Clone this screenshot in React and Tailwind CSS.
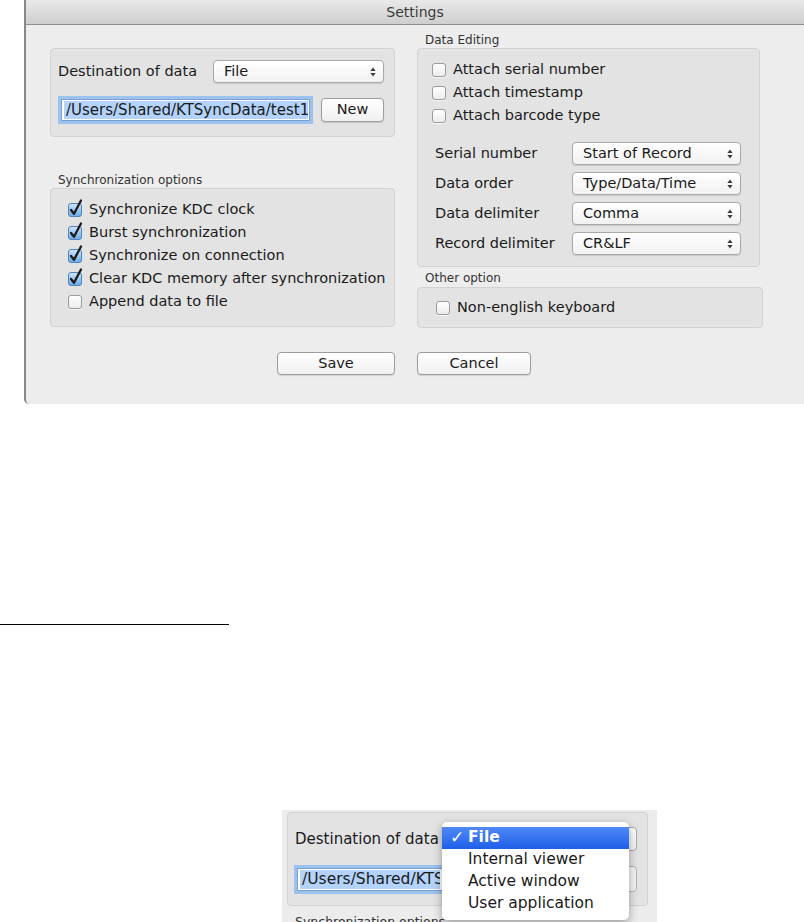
import React from "react";

const FONT = { fontFamily: '"DejaVu Sans", "Liberation Sans", sans-serif' };

function Check({ checked }) {
  if (!checked) {
    return (
      <div className="w-[14px] h-[14px] shrink-0 rounded-[3px] border border-[#9b9b9b] bg-linear-to-b from-white to-[#ececec] shadow-[0_1px_0_rgba(255,255,255,0.6)]" />
    );
  }
  return (
    <svg width="14" height="14" viewBox="0 0 14 14" overflow="visible" className="shrink-0">
      <defs>
        <linearGradient id="cbg" x1="0" y1="0" x2="0" y2="1">
          <stop offset="0" stopColor="#d3e7fb" />
          <stop offset="0.5" stopColor="#9cc8f1" />
          <stop offset="1" stopColor="#6aa7e6" />
        </linearGradient>
      </defs>
      <rect x="0.5" y="0.5" width="13" height="13" rx="2.5" fill="url(#cbg)" stroke="#4f84bf" />
      <path d="M3 7 L6 10.8 L13 -2.5" fill="none" stroke="#1c1c1c" strokeWidth="2.3" strokeLinecap="round" strokeLinejoin="round" />
    </svg>
  );
}

function Arrows() {
  return (
    <svg width="6" height="10" viewBox="0 0 6 10" className="shrink-0">
      <path d="M3 0.5 L5.6 4 L0.4 4 Z" fill="#3b3b3b" />
      <path d="M3 9.5 L5.6 6 L0.4 6 Z" fill="#3b3b3b" />
    </svg>
  );
}

function Popup({ value, width }) {
  return (
    <div
      className="h-[23px] rounded-[4px] border border-[#a9a9a9] bg-linear-to-b from-white to-[#f1f1f1] shadow-[0_1px_1px_rgba(0,0,0,0.12)] flex items-center justify-between pl-[10px] pr-[7px] text-[14.5px] text-[#1a1a1a]"
      style={{ width }}
    >
      <span>{value}</span>
      <Arrows />
    </div>
  );
}

function Button({ label, className }) {
  return (
    <div
      className={
        "rounded-[4px] border border-[#9d9d9d] bg-linear-to-b from-white to-[#f0f0f0] shadow-[0_1px_1px_rgba(0,0,0,0.12)] flex items-center justify-center text-[14.5px] text-[#1a1a1a] " +
        className
      }
    >
      {label}
    </div>
  );
}

function CheckRow({ checked, label }) {
  return (
    <div className="h-[23px] flex items-center gap-[7px] text-[14.5px] text-[#1a1a1a] whitespace-nowrap">
      <Check checked={checked} />
      <span>{label}</span>
    </div>
  );
}

function GroupLabel({ children }) {
  return <div className="h-[14px] leading-[14px] text-[12px] text-[#333] ml-[8px]">{children}</div>;
}

const box = "rounded-[4px] border border-[#d2d2d2] bg-[#e3e3e3]";

export default function App() {
  const editRows = [
    ["Serial number", "Start of Record"],
    ["Data order", "Type/Data/Time"],
    ["Data delimiter", "Comma"],
    ["Record delimiter", "CR&LF"],
  ];

  return (
    <div className="bg-white w-[804px] h-[922px] overflow-hidden" style={FONT}>
      {/* Settings window */}
      <div className="ml-[24px] h-[404px] border-l-2 border-[#888] rounded-bl-[5px] bg-[#ededed] flex flex-col">
        <div className="h-[25px] shrink-0 bg-linear-to-b from-[#e9e9e9] to-[#cecece] border-b border-[#8e8e8e] flex items-center justify-center text-[14px] text-[#3a3a3a]">
          Settings
        </div>
        <div className="pl-[24px]">
          <div className="flex gap-[22px] pt-[8px]">
            {/* left column */}
            <div className="w-[345px] mt-[15px]">
              <div className={box + " h-[89px] pt-[11px] pl-[7px]"}>
                <div className="flex items-center">
                  <div className="w-[155px] text-[14.5px] text-[#1a1a1a] whitespace-nowrap">Destination of data</div>
                  <Popup value="File" width={171} />
                </div>
                <div className="flex items-center h-[24px] mt-[15px]">
                  <div className="ml-[3px] w-[249px] h-[22px] border border-[#7a9fd1] bg-white shadow-[0_0_0_3px_#9cc2f0] flex items-center pl-[2px] pr-px">
                    <span className="bg-[#b3d3fb] w-full text-[15px] leading-[18px] text-[#1a1a1a] pl-[2px] whitespace-nowrap overflow-hidden">
                      /Users/Shared/KTSyncData/test1
                    </span>
                  </div>
                  <Button label="New" className="ml-[11px] w-[63px] h-[24px]" />
                </div>
              </div>
              <div className="mt-[36px]">
                <GroupLabel>Synchronization options</GroupLabel>
              </div>
              <div className={box + " mt-[1px] h-[139px] pt-[9px] pl-[17px]"}>
                <CheckRow checked label="Synchronize KDC clock" />
                <CheckRow checked label="Burst synchronization" />
                <CheckRow checked label="Synchronize on connection" />
                <CheckRow checked label="Clear KDC memory after synchronization" />
                <CheckRow label="Append data to file" />
              </div>
            </div>

            {/* right column */}
            <div className="w-[346px]">
              <GroupLabel>Data Editing</GroupLabel>
              <div className={box + " mt-[1px] w-[343px] h-[219px] pt-[9px] pl-[14px]"}>
                <CheckRow label="Attach serial number" />
                <CheckRow label="Attach timestamp" />
                <CheckRow label="Attach barcode type" />
                <div className="mt-[15px] flex flex-col gap-[7px]">
                  {editRows.map(([k, v]) => (
                    <div key={k} className="flex items-center">
                      <div className="ml-[3px] w-[137px] text-[14.5px] text-[#1a1a1a] whitespace-nowrap">{k}</div>
                      <Popup value={v} width={169} />
                    </div>
                  ))}
                </div>
              </div>
              <div className="mt-[4px]">
                <GroupLabel>Other option</GroupLabel>
              </div>
              <div className={box + " mt-[2px] h-[41px] pt-[8px] pl-[18px]"}>
                <CheckRow label="Non-english keyboard" />
              </div>
            </div>
          </div>

          <div className="flex gap-[22px] mt-[24px] pl-[227px]">
            <Button label="Save" className="w-[118px] h-[23px]" />
            <Button label="Cancel" className="w-[114px] h-[23px]" />
          </div>
        </div>
      </div>

      {/* divider line */}
      <div className="mt-[220px] w-[229px] h-px bg-black" />

      {/* popup snapshot */}
      <div className="ml-[282px] mt-[185px] w-[375px] h-[112px] bg-[#ececec] overflow-hidden relative pt-[2px] pl-[5px]">
        <div className={box + " w-[361px] h-[94px] pt-[14px] pl-[7px]"}>
          <div className="flex items-center h-[24px]">
            <div className="w-[157px] text-[15px] text-[#1a1a1a] whitespace-nowrap">Destination of data</div>
            <div className="w-[185px] h-[24px] rounded-[4px] border border-[#a9a9a9] bg-linear-to-b from-white to-[#f1f1f1]" />
          </div>
          <div className="flex items-center h-[26px] mt-[15px]">
            <div className="ml-[2px] w-[259px] h-[23px] border border-[#7a9fd1] bg-white shadow-[0_0_0_3px_#9cc2f0] flex items-center pl-[2px]">
              <span className="bg-[#b3d3fb] w-[140px] text-[15.5px] leading-[19px] text-[#1a1a1a] pl-[2px] whitespace-nowrap overflow-hidden">
                /Users/Shared/KTS
              </span>
            </div>
            <div className="ml-[8px] w-[73px] h-[26px] rounded-[4px] border border-[#b5b5b5] bg-[#f4f4f4] flex items-center justify-center text-[15px] text-[#cfcfcf]">
              New
            </div>
          </div>
        </div>
        <div className="mt-[7px] ml-[8px] text-[12.5px] text-[#333]">Synchronization options</div>

        <div className="absolute left-[160px] top-[12px] w-[187px] h-[98px] bg-white rounded-[5px] shadow-[0_3px_10px_rgba(0,0,0,0.35)] pt-[5px] text-[15.5px]">
          <div className="h-[22px] flex items-center bg-linear-to-b from-[#5089f7] to-[#1e5ee9] text-white">
            <span className="w-[26px] pl-[8px] text-[17px] font-bold">✓</span>
            <span className="font-bold">File</span>
          </div>
          {["Internal viewer", "Active window", "User application"].map((t) => (
            <div key={t} className="h-[22px] flex items-center pl-[26px] text-[#1a1a1a]">
              {t}
            </div>
          ))}
        </div>
      </div>
    </div>
  );
}
